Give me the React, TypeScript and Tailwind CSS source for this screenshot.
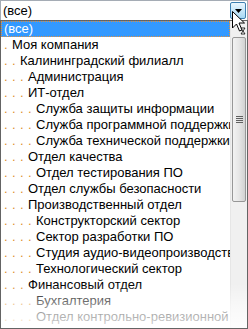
import React from 'react';

const items: { level: number; label: string }[] = [
  { level: 1, label: 'Моя компания' },
  { level: 2, label: 'Калининградский филиалл' },
  { level: 3, label: 'Администрация' },
  { level: 3, label: 'ИТ-отдел' },
  { level: 4, label: 'Служба защиты информации' },
  { level: 4, label: 'Служба программной поддержки' },
  { level: 4, label: 'Служба технической поддержки' },
  { level: 3, label: 'Отдел качества' },
  { level: 4, label: 'Отдел тестирования ПО' },
  { level: 3, label: 'Отдел службы безопасности' },
  { level: 3, label: 'Производственный отдел' },
  { level: 4, label: 'Конструкторский сектор' },
  { level: 4, label: 'Сектор разработки ПО' },
  { level: 4, label: 'Студия аудио-видеопроизводства' },
  { level: 4, label: 'Технологический сектор' },
  { level: 3, label: 'Финансовый отдел' },
  { level: 4, label: 'Бухгалтерия' },
  { level: 4, label: 'Отдел контрольно-ревизионной работы' },
];

function Cursor() {
  return (
    <svg className="absolute left-[232px] top-[11px]" width="16" height="24" viewBox="0 0 16 24">
      <path d="M0.5 0.5 L0.5 17 L4.5 13 L7.5 20 L10 19 L7 12 L12.5 12 Z" fill="#fff" stroke="#000" strokeWidth="1" />
      <path d="M9 17 L13 17 L11 20 L13 23 L9 23 L11 20 Z" fill="#fff" stroke="#000" strokeWidth="0.8" />
    </svg>
  );
}

export default function App() {
  return (
    <div
      className="relative w-[248px] h-[329px] overflow-hidden bg-white text-[13px] text-black"
      style={{ fontFamily: '"Liberation Sans", Arial, sans-serif' }}
    >
      {/* select box */}
      <div className="flex h-[20px] items-center border border-b-0 border-[#a5acb5] pl-[2px] pr-[1px]">
        <span className="flex-1 leading-[18px]">(все)</span>
        <div className="flex h-[17px] w-[16px] items-center justify-center rounded-[2px] border border-[#3c7fb1] bg-gradient-to-b from-[#eaf6fd] to-[#a7d9f5]">
          <svg width="7" height="4" viewBox="0 0 7 4">
            <path d="M0 0 H7 L3.5 4 Z" fill="#000" />
          </svg>
        </div>
      </div>

      {/* dropdown list */}
      <div className="relative flex h-[309px] border border-[#646464]">
        <div className="min-w-0 flex-1 overflow-hidden">
          <div className="flex h-[16px] items-center border border-dotted border-[#e09040] bg-[#3399ff] pl-[2px] text-white">
            (все)
          </div>
          {items.map((it, i) => (
            <div key={i} className="flex h-[16px] items-center whitespace-nowrap pl-[3px]">
              {Array.from({ length: it.level }).map((_, d) => (
                <span key={d} className="inline-block w-[8px] shrink-0 text-[#e0902b]">.</span>
              ))}
              <span className="shrink-0">{it.label}</span>
            </div>
          ))}
        </div>
        <div className="flex w-[17px] shrink-0 flex-col border-l border-[#e6e6e6] bg-[#f0f0f0]">
          <div className="h-[16px]" />
          <div className="mx-[1px] flex h-[165px] items-center justify-center rounded-[2px] border border-[#979797] bg-gradient-to-r from-[#f2f2f2] via-[#e6e6e6] to-[#d2d2d2]">
            <div className="flex flex-col gap-[1px]">
              <div className="h-[1px] w-[7px] bg-[#606060]" />
              <div className="h-[1px] w-[7px] bg-[#606060]" />
              <div className="h-[1px] w-[7px] bg-[#606060]" />
              <div className="h-[1px] w-[7px] bg-[#606060]" />
            </div>
          </div>
        </div>

        {/* bottom fade */}
        <div className="pointer-events-none absolute bottom-0 left-0 h-[44px] w-full bg-gradient-to-b from-transparent via-white/55 to-white/85" />
      </div>

      <Cursor />
    </div>
  );
}
